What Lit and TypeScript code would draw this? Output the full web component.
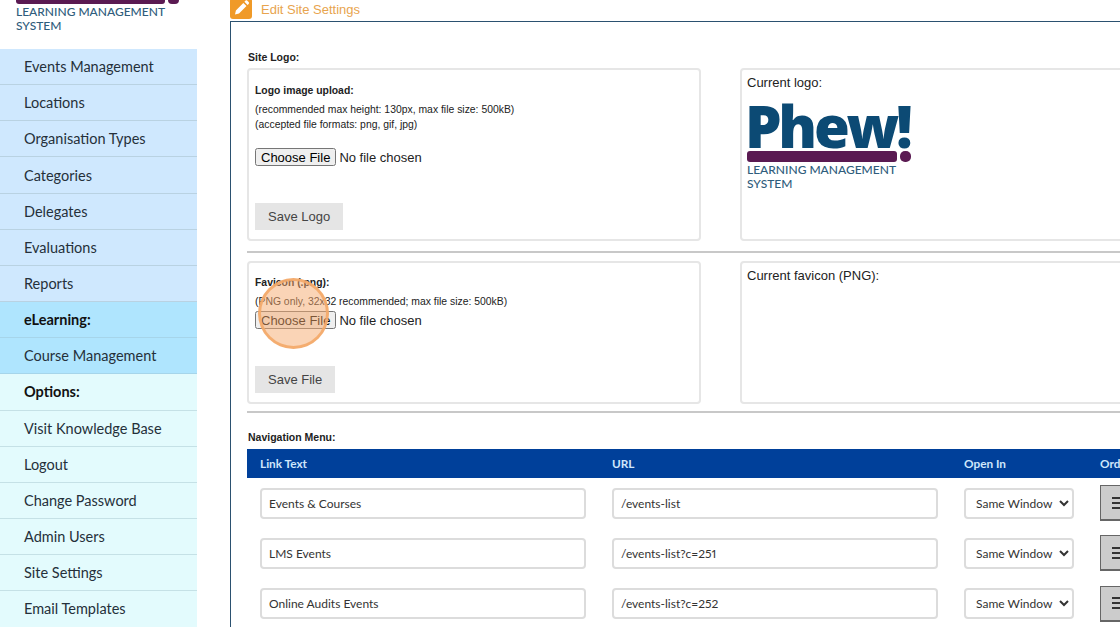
import { LitElement, html, css } from "lit";
import { customElement } from "lit/decorators.js";

const groups: [string, string][] = [
  ["Events Management", "blue"], ["Locations", "blue"], ["Organisation Types", "blue"], ["Categories", "blue"],
  ["Delegates", "blue"], ["Evaluations", "blue"], ["Reports", "blue"], ["eLearning:", "sky head"],
  ["Course Management", "sky"], ["Options:", "mint head"], ["Visit Knowledge Base", "mint"], ["Logout", "mint"],
  ["Change Password", "mint"], ["Admin Users", "mint"], ["Site Settings", "mint"], ["Email Templates", "mint"],
];
const rows = [
  ["Events & Courses", "/events-list"],
  ["LMS Events", "/events-list?c=251"],
  ["Online Audits Events", "/events-list?c=252"],
];

@customElement("app-root")
export class AppRoot extends LitElement {
  static styles = css`
    :host { display: flex; width: 1120px; height: 627px; overflow: hidden; background: #fff; position: relative; font-family: "Liberation Sans", Arial, sans-serif; color: #222; }
    * { box-sizing: border-box; }
    .side { width: 197px; flex: none; }
    .brand { height: 49px; padding-left: 16px; }
    .strap { display: flex; gap: 3px; height: 4px; width: 163px; }
    .strap i { display: block; background: #5a1a52; border-radius: 0 0 3px 3px; }
    .strap i:first-child { width: 149px; }
    .strap i:last-child { width: 11px; border-radius: 0 0 5px 5px; flex: none; }
    .tag { font: 500 12px/13.5px "Lato", sans-serif; color: #2f5d7c; margin-top: 1px; }
    .item { height: 36.16px; padding-left: 24px; display: flex; align-items: center; font: 14.5px "Lato", sans-serif; color: #25303a; border-bottom: 1px solid #b9d2e2; }
    .blue { background: #cfe8fe; }
    .sky { background: #afe5fe; border-bottom-color: #a6d5ea; }
    .mint { background: #e3fbfd; border-bottom-color: #c5e1e6; }
    .head { font-weight: 700; color: #111; }
    .main { margin-left: 33px; width: 890px; flex: none; }
    .title { height: 21px; display: flex; gap: 9px; align-items: flex-start; font-size: 13px; line-height: 19px; color: #e8a44e; }
    .title svg { display: block; margin-top: -2px; flex: none; }
    .panel { border-left: 1px solid #2b5170; border-top: 1px solid #2b5170; padding: 28px 0 0 16px; height: 700px; }
    .label { font-size: 10.5px; font-weight: 700; line-height: 14px; color: #222; padding-left: 1px; }
    .boxes { display: grid; grid-template-columns: 454px 440px; gap: 39px; margin-top: 4px; }
    .box { border: 2px solid #e6e6e6; border-radius: 4px; padding: 13px 6px 0; display: flex; flex-direction: column; align-items: flex-start; }
    .logo { height: 173px; }
    .fav { height: 143px; }
    .box b { font-size: 10.4px; line-height: 14px; }
    .logo b { padding-top: 1px; }
    .hint { font-size: 10.4px; line-height: 15px; margin-top: 4px; color: #222; }
    input[type="file"] { font: 13px "Liberation Sans", sans-serif; color: #222; display: block; height: 18px; width: 240px; padding: 0; }
    input[type="file"]::file-selector-button { height: 18px; font: 13px "Liberation Sans", sans-serif; margin-right: 3px; padding: 0 4px; }
    .logo input { margin-top: 16px; }
    .fav input { margin-top: 2px; }
    .save { border: 0; background: #e5e5e5; color: #444; font: 13px "Liberation Sans", sans-serif; height: 27px; padding: 0 13px; margin-top: auto; margin-bottom: 9px; }
    .cur { font-size: 13px; line-height: 16px; color: #222; padding: 5px 0 0 5px; }
    .phew { margin-top: 10px; width: 164px; }
    .word { font: 900 58px/50px "Open Sans", sans-serif; color: #0c4a74; letter-spacing: -3.3px; height: 50px; margin-left: -2px; }
    .phew .strap { width: 164px; height: 11px; }
    .phew .strap i { border-radius: 3px; }
    .phew .strap i:first-child { width: 151px; }
    .phew .strap i:last-child { border-radius: 5px; }
    .phew .tag { margin-top: 1px; }
    .rule { height: 2px; background: #c8c8c8; }
    .r1 { margin: 10px 0 8px; }
    .r2 { margin: 7px 0 17px; }
    .grid { display: grid; grid-template-columns: 326px 326px 110px 60px; column-gap: 26px; padding-left: 13px; align-items: center; }
    .th { background: #00409a; height: 29px; margin-top: 5px; font: 700 11.8px "Lato", sans-serif; color: #cfe6fb; }
    .tr { height: 50.3px; }
    .field { height: 31px; width: 100%; border: 2px solid #dcdcdc; border-radius: 4px; padding: 0 7px; font: 12px "Lato", sans-serif; font-variant-numeric: proportional-nums; color: #333; background: #fff; outline: 0; }
    select.field { padding: 0 2px 0 6px; }
    .order { width: 40px; height: 36px; background: #ccc; border: 1px solid #666; border-width: 1px 0 2px 1px; padding: 0 0 0 11px; display: flex; flex-direction: column; gap: 3px; justify-content: center; }
    .order i { display: block; height: 2px; width: 14px; background: #333; }
    .spot { position: absolute; left: 258px; top: 278px; width: 71px; height: 71px; border-radius: 50%; background: rgba(246, 170, 110, .5); border: 3px solid rgba(244, 170, 105, .9); pointer-events: none; }
  `;

  render() {
    return html`
      <nav class="side">
        <div class="brand">
          <div class="strap"><i></i><i></i></div>
          <div class="tag">LEARNING MANAGEMENT<br />SYSTEM</div>
        </div>
        ${groups.map(([t, c]) => html`<div class="item ${c}">${t}</div>`)}
      </nav>
      <main class="main">
        <div class="title">
          <svg width="22" height="21" viewBox="0 0 22 21"><rect width="22" height="21" rx="3" fill="#f09a28"/><path d="M5 16.5l.9-4 7.4-7.6 3.2 3.1-7.5 7.6zM14.4 3.8l1-1c.6-.6 1.4-.6 2 0l1.2 1.2c.6.6.6 1.4 0 2l-1 1z" fill="#fff"/></svg>
          <span>Edit Site Settings</span>
        </div>
        <section class="panel">
          <div class="label">Site Logo:</div>
          <div class="boxes">
            <div class="box logo">
              <b>Logo image upload:</b>
              <div class="hint">(recommended max height: 130px, max file size: 500kB)<br />(accepted file formats: png, gif, jpg)</div>
              <input type="file" />
              <button class="save">Save Logo</button>
            </div>
            <div class="box logo cur">
              Current logo:
              <div class="phew">
                <div class="word">Phew!</div>
                <div class="strap"><i></i><i></i></div>
                <div class="tag">LEARNING MANAGEMENT<br />SYSTEM</div>
              </div>
            </div>
          </div>
          <div class="rule r1"></div>
          <div class="boxes">
            <div class="box fav">
              <b>Favicon (.png):</b>
              <div class="hint">(PNG only, 32x32 recommended; max file size: 500kB)</div>
              <input type="file" />
              <button class="save">Save File</button>
            </div>
            <div class="box fav cur">Current favicon (PNG):</div>
          </div>
          <div class="rule r2"></div>
          <div class="label">Navigation Menu:</div>
          <div class="grid th"><span>Link Text</span><span>URL</span><span>Open In</span><span>Order</span></div>
          ${rows.map(([a, b]) => html`
            <div class="grid tr">
              <input class="field" .value=${a} />
              <input class="field" .value=${b} />
              <select class="field"><option>Same Window</option><option>New Window</option></select>
              <div class="order"><i></i><i></i><i></i></div>
            </div>`)}
        </section>
      </main>
      <div class="spot"></div>
    `;
  }
}
